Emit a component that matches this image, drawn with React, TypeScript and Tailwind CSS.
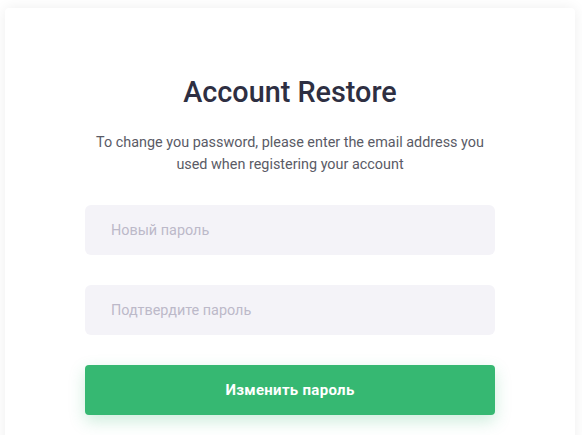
export default function App() {
  return (
    <div className="min-h-[435px] bg-white pt-2 pl-[5px] pr-[7px] font-['Roboto',sans-serif]">
      <div className="bg-white rounded shadow-[0_0_14px_rgba(0,0,0,0.07)] px-20 pt-[66px] pb-8">
        <h1 className="text-center text-[28.8px] font-medium leading-9 text-[#2e2f42]">
          Account Restore
        </h1>
        <p className="mt-[22px] text-center text-[14.4px] leading-[22px] text-[#5a5b66]">
          To change you password, please enter the email address you
          <br />
          used when registering your account
        </p>
        <form className="mt-[29px] flex flex-col gap-[30px]">
          <input
            type="password"
            placeholder="Новый пароль"
            className="h-[50px] w-full rounded-md bg-[#f4f3f8] px-[26px] text-[14.4px] text-[#2e2f42] outline-none placeholder:text-[#bcb9c9]"
          />
          <input
            type="password"
            placeholder="Подтвердите пароль"
            className="h-[50px] w-full rounded-md bg-[#f4f3f8] px-[26px] text-[14.4px] text-[#2e2f42] outline-none placeholder:text-[#bcb9c9]"
          />
          <button
            type="button"
            className="h-[50px] w-full rounded bg-[#36b872] text-[15px] font-bold tracking-[0.3px] text-white shadow-[0_6px_16px_rgba(54,184,114,0.25)]"
          >
            Изменить пароль
          </button>
        </form>
      </div>
    </div>
  )
}
